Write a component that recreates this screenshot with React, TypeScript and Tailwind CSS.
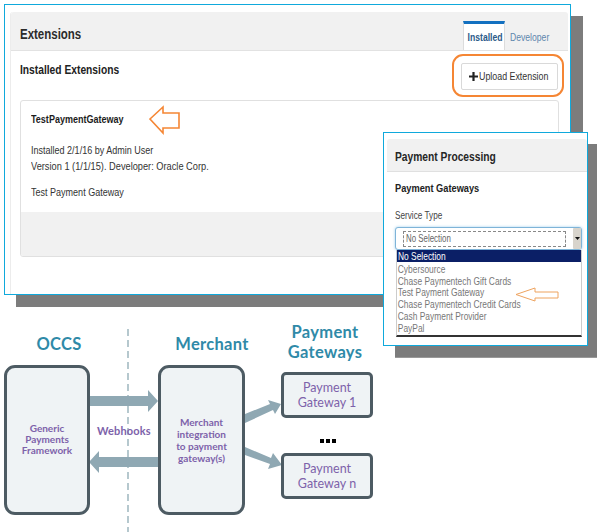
import React from "react";

const sans = "font-['Liberation_Sans',Arial,sans-serif]";
const lato = "font-['Lato','Noto_Sans',sans-serif]";
const sq = "origin-left scale-x-[0.82] whitespace-nowrap";

function Blk({ className, children }: { className: string; children?: React.ReactNode }) {
  return <div className={className}>{children}</div>;
}

function DiagramBox({ className, children }: { className: string; children: React.ReactNode }) {
  return (
    <div className={`absolute flex items-center justify-center border-[3px] border-[#4d5b63] bg-[#eff3f5] text-center text-[#7d62aa] ${lato} ${className}`}>
      {children}
    </div>
  );
}

function Heading({ className, children }: { className: string; children: React.ReactNode }) {
  return (
    <div className={`absolute text-center text-[16.5px] font-bold leading-[20px] tracking-[0.3px] text-[#2f8aa8] ${lato} ${className}`}>
      {children}
    </div>
  );
}

const options = ["Cybersource", "Chase Paymentech Gift Cards", "Test Payment Gateway", "Chase Paymentech Credit Cards", "Cash Payment Provider", "PayPal"];

export default function App() {
  return (
    <div className={`relative h-[532px] w-[603px] overflow-hidden bg-white ${sans}`}>
      {/* Extensions window */}
      <Blk className="absolute left-[16px] top-[16px] h-[291px] w-[567px] bg-[#7c7c7c]" />
      <div className="absolute left-[4px] top-[4px] h-[291px] w-[567px] border border-[#0fa9dc] bg-white pl-[5px] pr-[2px] pt-[7px]">
        <div className="h-full rounded-t-[3px] border-l border-[#ececec]">
          <div className="flex h-[39px] items-stretch justify-between rounded-t-[3px] border-b border-[#e2e2e2] bg-[#f1f1f1] pl-[9px]">
            <div className={`pt-[14px] text-[14px] font-bold leading-[16px] text-[#2b2b2b] ${sq}`}>Extensions</div>
            <div className="mr-[21px] flex items-end pt-[9px]">
              <div className="h-[29px] w-[42px] border-x border-[#dcdcdc] border-t-[3px] border-t-[#1270c0] bg-white pt-[7px] text-center text-[10.5px] font-bold leading-[12px] text-[#2c5b8a]">
                <div className="scale-x-[0.82] whitespace-nowrap">Installed</div>
              </div>
              <div className="h-[29px] w-[42px] pl-[5px] pt-[10px] text-[10.5px] leading-[12px] text-[#5d86ad]">
                <div className={sq}>Developer</div>
              </div>
            </div>
          </div>
          <div className="px-[9px]">
            <div className="relative flex h-[49px] justify-between">
              <div className={`pt-[12px] text-[12.5px] font-bold leading-[14px] text-[#222] ${sq}`}>Installed Extensions</div>
              <div className="mr-[1px] mt-[12px] flex h-[27px] w-[97px] items-center rounded-[2px] border border-[#d9d9d9] bg-white pl-[7px] text-[11.5px] text-[#333]">
                <svg className="shrink-0" width="9" height="9" viewBox="0 0 9 9"><path d="M3.400 0h2.200v3.400H9v2.200H5.600V9H3.400V5.600H0V3.400h3.400z" fill="#222" /></svg>
                <span className="ml-[1px] origin-left scale-x-[0.77] whitespace-nowrap">Upload Extension</span>
              </div>
              <Blk className="absolute right-[-5px] top-[3px] h-[43px] w-[112px] rounded-[11px] border-2 border-[#f58634]" />
            </div>
            <div className="h-[157px] w-[539px] overflow-hidden rounded-[3px] border border-[#e0e0e0] bg-white">
              <div className="h-[111px] pl-[10px] pt-[11px] text-[11px] leading-[16px] text-[#333]">
                <div className={`flex h-[14px] items-center font-bold text-[#1c1c1c] ${sq}`}>TestPaymentGateway</div>
                <div className={`mt-[16px] ${sq}`}>Installed 2/1/16 by Admin User</div>
                <div className="origin-left scale-x-[0.84] whitespace-nowrap">Version 1 (1/1/15). Developer: Oracle Corp.</div>
                <div className={`mt-[10px] ${sq}`}>Test Payment Gateway</div>
              </div>
              <Blk className="h-[45px] bg-[#f1f1f1]" />
            </div>
          </div>
        </div>
      </div>
      <svg className="absolute left-[148px] top-[105px]" width="33" height="30" viewBox="0 0 33 30">
        <path d="M2 14 L15 2 V8 H31 V23 H15 V28 Z" fill="#fff" stroke="#f58634" strokeWidth="1.600" />
      </svg>

      {/* Payment Processing window */}
      <div className="absolute left-[395px] top-[144px] h-[214px] w-[202px] border-b border-[#999] bg-[#7c7c7c]" />
      <div className="absolute left-[383px] top-[132px] h-[214px] w-[205px] border border-[#0fa9dc] bg-white pl-[3px] pt-[6px]">
        <div className="flex h-[33px] items-center rounded-t-[3px] border-b border-[#e0e0e0] bg-[#f1f1f1] pl-[8px] pt-[4px] text-[12.5px] font-bold text-[#262626]">
          <div className={sq}>Payment Processing</div>
        </div>
        <div className="pl-[8px]">
          <div className="origin-left scale-x-[0.88] whitespace-nowrap pt-[9px] text-[10.5px] font-bold leading-[14px] text-[#222]">Payment Gateways</div>
          <div className={`pt-[14px] text-[10px] leading-[14px] text-[#444] ${sq}`}>Service Type</div>
          <div className="mt-[4px] flex h-[23px] w-[187px] items-center rounded-[3px] border border-[#7fb4d8] bg-white shadow-[0_0_3px_#9fd0ee]">
            <div className="ml-[7px] flex h-[16px] w-[163px] items-center border border-dashed border-[#888] pl-[2px] text-[10px] text-[#666]">
              <div className="origin-left scale-x-[0.79] whitespace-nowrap">No Selection</div>
            </div>
            <div className="ml-[7px] flex h-[21px] w-[8px] items-center justify-center rounded-[1px] bg-[#d8d4cc]">
              <svg width="5" height="3" viewBox="0 0 5 3"><path d="M0 0h5L2.500 3z" fill="#111" /></svg>
            </div>
          </div>
          <div className="ml-[1px] h-[87px] w-[186px] border-x border-b-2 border-x-[#ccc] border-b-[#333] bg-white text-[10.5px] leading-[11.7px] text-[#777]">
            <div className="mb-[2px] flex h-[12px] items-center bg-[#0b1f66] pl-[1px] pt-[1px] text-white">
              <div className="origin-left scale-x-[0.8] whitespace-nowrap">No Selection</div>
            </div>
            {options.map((o) => (
              <div key={o} className="origin-left scale-x-[0.8] whitespace-nowrap pl-[1px]">{o}</div>
            ))}
          </div>
        </div>
      </div>
      <svg className="absolute left-[515px] top-[287px]" width="45" height="15" viewBox="0 0 45 15">
        <path d="M1 7.500 L20 1 V5 H43 V11 H20 V14 Z" fill="#fff" stroke="#eea35f" strokeWidth="1" />
      </svg>

      {/* Diagram */}
      <svg className="absolute left-0 top-[320px]" width="400" height="212" viewBox="0 320 400 212">
        <line x1="128" y1="329" x2="128" y2="532" stroke="#aec3c9" strokeWidth="1.800" strokeDasharray="7 4" />
        <path d="M89 396h59v-6l10 11-10 11v-6H89z" fill="#8fa8b3" />
        <path d="M159 457H99v-6l-10 11 10 11v-6h60z" fill="#8fa8b3" />
        <path d="M245 414 L270 404 L268 400 L281 404 L275 414 L273 410 L245 423z" fill="#8fa8b3" />
        <path d="M245 447 L271 458 L273 453 L282 465 L268 469 L270 464 L245 455z" fill="#8fa8b3" />
      </svg>
      <Heading className="left-[4px] top-[334px] w-[110px]">OCCS</Heading>
      <Heading className="left-[157px] top-[334px] w-[110px]">Merchant</Heading>
      <Heading className="left-[270px] top-[322px] w-[110px]">Payment<br />Gateways</Heading>
      <DiagramBox className="left-[4px] top-[365px] h-[150px] w-[86px] rounded-[11px] pb-[2px] text-[10px] font-bold leading-[11px]">
        <div>Generic<br />Payments<br />Framework</div>
      </DiagramBox>
      <div className={`absolute left-[97px] top-[424px] text-[11px] font-bold leading-[14px] tracking-[0.15px] text-[#7d62aa] ${lato}`}>Webhooks</div>
      <DiagramBox className="left-[158px] top-[365px] h-[150px] w-[87px] rounded-[11px] text-[10px] font-bold leading-[12px]">
        <div>Merchant<br />integration<br />to payment<br />gateway(s)</div>
      </DiagramBox>
      <DiagramBox className="left-[281px] top-[372px] h-[46px] w-[92px] rounded-[5px] text-[12.5px] leading-[15px]">
        <div>Payment<br />Gateway 1</div>
      </DiagramBox>
      <div className="absolute left-[320px] top-[439px] flex gap-[2px]">
        <Blk className="h-[4px] w-[4px] bg-black" />
        <Blk className="h-[4px] w-[4px] bg-black" />
        <Blk className="h-[4px] w-[4px] bg-black" />
      </div>
      <DiagramBox className="left-[281px] top-[453px] h-[46px] w-[92px] rounded-[5px] text-[12.5px] leading-[15px]">
        <div>Payment<br />Gateway n</div>
      </DiagramBox>
    </div>
  );
}
